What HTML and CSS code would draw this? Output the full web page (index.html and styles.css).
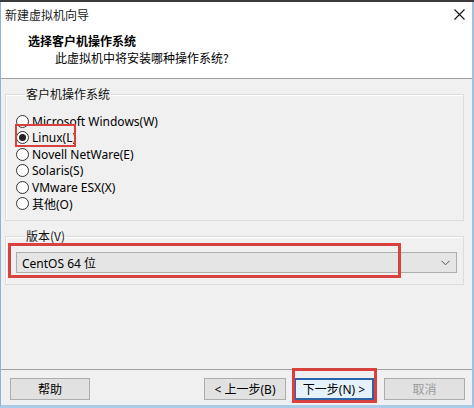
FILE: index.html
```html
<!DOCTYPE html>
<html lang="zh-CN">
<head>
<meta charset="utf-8">
<title>新建虚拟机向导</title>
<link rel="stylesheet" href="styles.css">
</head>
<body>
<div class="top-strip"></div>
<div class="window">
  <div class="titlebar">
    <span class="title-text">新建虚拟机向导</span>
    <svg class="close" width="11" height="11" viewBox="0 0 11 11"><path d="M0.5 0.5 L10.5 10.5 M10.5 0.5 L0.5 10.5" stroke="#111" stroke-width="1.1" fill="none"/></svg>
  </div>
  <div class="header">
    <div class="h-title">选择客户机操作系统</div>
    <div class="h-sub">此虚拟机中将安装哪种操作系统?</div>
  </div>
  <div class="body">
    <fieldset class="group group-os">
      <legend>客户机操作系统</legend>
      <div class="radio-row"><span class="radio"></span><span>Microsoft Windows(W)</span></div>
      <div class="radio-row marked"><span class="radio checked"></span><span>Linux(L)</span><span class="mark mark-linux"></span></div>
      <div class="radio-row"><span class="radio"></span><span>Novell NetWare(E)</span></div>
      <div class="radio-row"><span class="radio"></span><span>Solaris(S)</span></div>
      <div class="radio-row"><span class="radio"></span><span>VMware ESX(X)</span></div>
      <div class="radio-row"><span class="radio"></span><span>其他(O)</span></div>
    </fieldset>
    <fieldset class="group group-ver">
      <legend>版本(V)</legend>
      <div class="select">
        <span class="select-text">CentOS 64 位</span>
        <svg class="chev" width="9" height="6" viewBox="0 0 9 6"><path d="M0.5 0.8 L4.5 4.8 L8.5 0.8" stroke="#555" stroke-width="1" fill="none"/></svg>
        <span class="mark mark-select"></span>
      </div>
    </fieldset>
  </div>
  <div class="footer">
    <button class="btn btn-help">帮助</button>
    <div class="btn-spacer"></div>
    <button class="btn btn-back">&lt; 上一步(B)</button>
    <button class="btn btn-next">下一步(N) &gt;<span class="mark mark-next"></span></button>
    <button class="btn btn-cancel">取消</button>
  </div>
</div>
</body>
</html>
```

FILE: styles.css
```css
* { box-sizing: border-box; }
html, body {
  margin: 0;
  padding: 0;
  width: 474px;
  height: 408px;
  overflow: hidden;
  background: #f0f0f0;
  font-family: "Noto Sans", "Noto Sans CJK SC", sans-serif;
  font-size: 12px;
  color: #000;
}
.top-strip {
  height: 2px;
  background: #3a3a3a;
}
.window {
  height: 406px;
  display: flex;
  flex-direction: column;
  border-left: 1px solid #8fb3d8;
  border-right: 2px solid #9cc3e6;
  border-bottom: 3px solid #a9cde9;
  background: #f0f0f0;
}
.titlebar {
  height: 24px;
  background: #fff;
  display: flex;
  align-items: center;
  justify-content: space-between;
  padding: 0 7px 0 4px;
}
.title-text {
  font-family: "Noto Sans CJK SC", sans-serif;
  font-size: 12px;
  color: #222;
}
.close { display: block; }
.header {
  height: 53px;
  background: #fff;
  padding: 7px 0 0 0;
  border-bottom: 1px solid #a0a0a0;
}
.h-title {
  font-family: "Noto Sans CJK SC", sans-serif;
  font-weight: bold;
  font-size: 12px;
  line-height: 16px;
  padding-left: 27px;
  margin-bottom: 1px;
}
.h-sub {
  font-family: "Noto Sans CJK SC", sans-serif;
  font-size: 12px;
  line-height: 16px;
  padding-left: 54px;
}
.body {
  flex: 1;
  padding: 7px 8px 0 4px;
  display: flex;
  flex-direction: column;
}
.group {
  margin: 0;
  border: 1px solid #dcdcdc;
  box-shadow: inset 1px 1px 0 #fff;
  min-width: 0;
}
.group legend {
  padding: 0 1px;
  margin-left: 9px;
  line-height: 16px;
  font-family: "Noto Sans CJK SC", sans-serif;
  color: #111;
}
.group-os {
  padding: 11px 6px 8px 10px;
}
.radio-row {
  position: relative;
  display: flex;
  align-items: center;
  height: 16.5px;
  gap: 3px;
  white-space: nowrap;
}
.radio {
  width: 13px;
  height: 13px;
  border: 1px solid #333;
  border-radius: 50%;
  background: #fff;
  position: relative;
  flex: none;
}
.radio.checked::after {
  content: "";
  position: absolute;
  left: 2px;
  top: 2px;
  width: 7px;
  height: 7px;
  border-radius: 50%;
  background: #222;
}
.mark {
  position: absolute;
  border: 2px solid #d9413f;
  pointer-events: none;
}
.mark-linux {
  left: -1px;
  top: -6px;
  width: 61px;
  height: 23px;
}
.group-ver {
  margin-top: 7px;
  padding: 8px 6px 11px 10px;
}
.select {
  position: relative;
  height: 21px;
  background: #e5e5e5;
  border: 1px solid #adadad;
  display: flex;
  align-items: center;
  justify-content: space-between;
  padding: 0 6px 0 5px;
}
.select-text { white-space: nowrap; }
.chev { display: block; }
.mark-select {
  left: -9px;
  top: -10px;
  width: 393px;
  height: 35px;
  border-width: 3px;
}
.footer {
  border-top: 1px solid #a0a0a0;
  padding: 8px 7px 5px 9px;
  display: flex;
  align-items: center;
}
.btn {
  position: relative;
  height: 22px;
  width: 81px;
  background: #e1e1e1;
  border: 1px solid #adadad;
  font-family: "Noto Sans", "Noto Sans CJK SC", sans-serif;
  font-size: 12px;
  color: #000;
  padding: 0;
  white-space: nowrap;
}
.btn-help { width: 80px; }
.btn-spacer { flex: 1; }
.btn-back { width: 82px; }
.btn-next {
  width: 80px;
  margin-left: 8px;
  border: 2px solid #2c64a8;
  background: #e5f1fb;
}
.mark-next {
  left: -4px;
  top: -12px;
  width: 85px;
  height: 35px;
  border-width: 3px;
}
.btn-cancel {
  margin-left: 10px;
  color: #9a9a9a;
}
```
